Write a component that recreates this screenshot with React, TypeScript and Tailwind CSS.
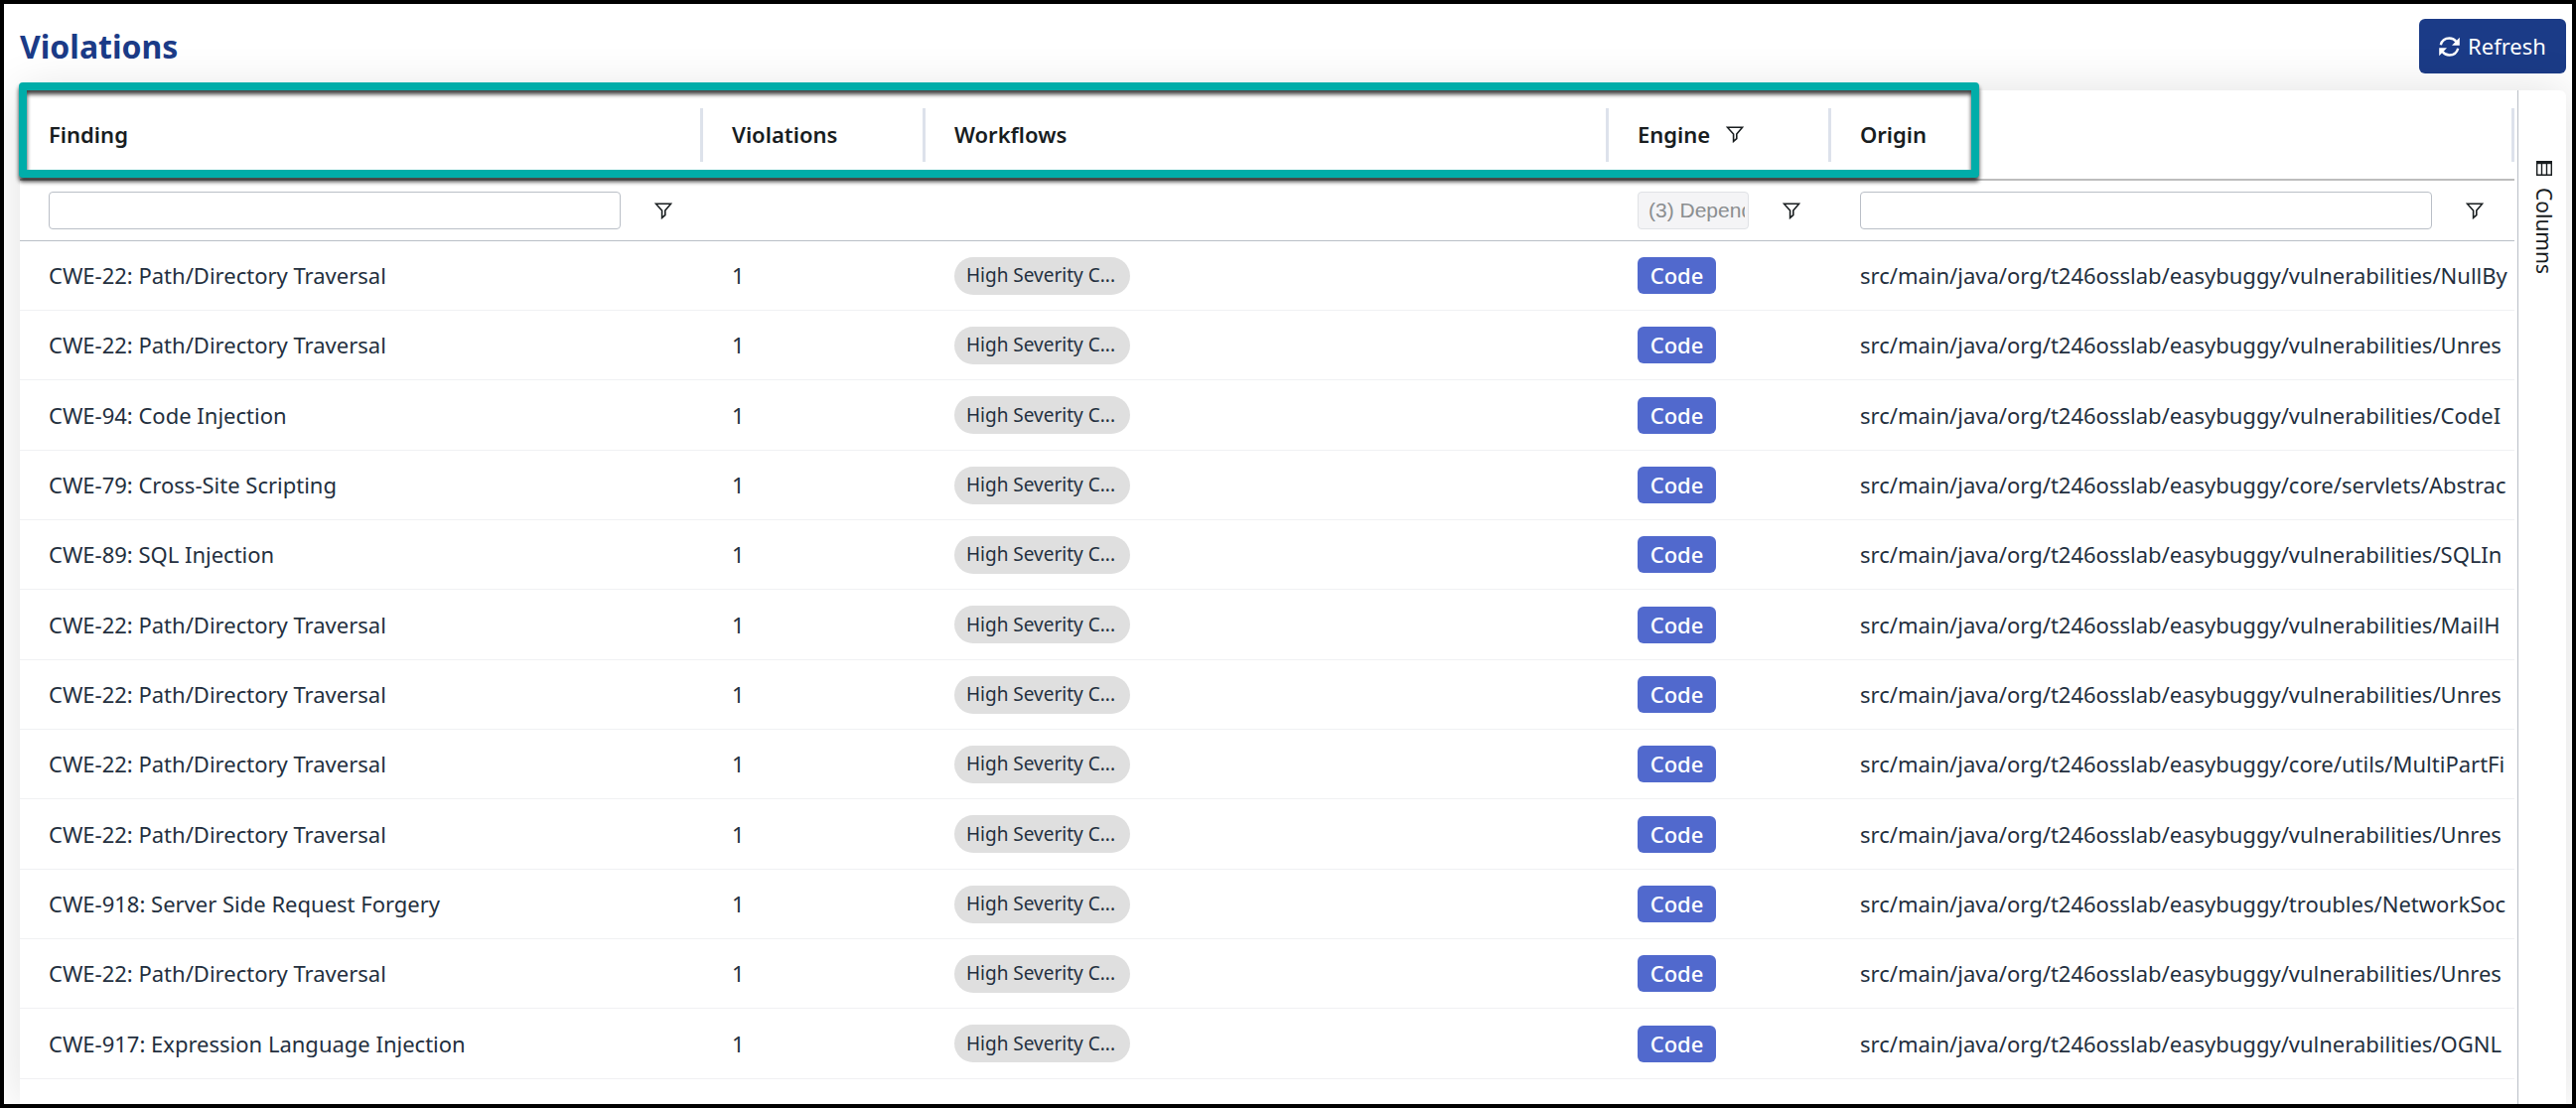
import { useState } from 'react'

const findings = [
  { name: 'CWE-22: Path/Directory Traversal', origin: 'vulnerabilities/NullBy' },
  { name: 'CWE-22: Path/Directory Traversal', origin: 'vulnerabilities/Unres' },
  { name: 'CWE-94: Code Injection', origin: 'vulnerabilities/CodeI' },
  { name: 'CWE-79: Cross-Site Scripting', origin: 'core/servlets/Abstrac' },
  { name: 'CWE-89: SQL Injection', origin: 'vulnerabilities/SQLIn' },
  { name: 'CWE-22: Path/Directory Traversal', origin: 'vulnerabilities/MailH' },
  { name: 'CWE-22: Path/Directory Traversal', origin: 'vulnerabilities/Unres' },
  { name: 'CWE-22: Path/Directory Traversal', origin: 'core/utils/MultiPartFi' },
  { name: 'CWE-22: Path/Directory Traversal', origin: 'vulnerabilities/Unres' },
  { name: 'CWE-918: Server Side Request Forgery', origin: 'troubles/NetworkSoc' },
  { name: 'CWE-22: Path/Directory Traversal', origin: 'vulnerabilities/Unres' },
  { name: 'CWE-917: Expression Language Injection', origin: 'vulnerabilities/OGNL' },
]

const headers = ['Finding', 'Violations', 'Workflows', 'Engine', 'Origin']

function RefreshIcon() {
  return (
    <svg viewBox="0 0 21 20" className="h-5 w-[21px]" fill="none" stroke="currentColor" strokeWidth="2.4">
      <path d="M1.8 8.2C2.8 4.2 6.2 1.5 10.5 1.5c3 0 5.4 1.3 7 3.4M19.2 11.8c-1 4-4.4 6.7-8.7 6.7-3 0-5.4-1.3-7-3.4" />
      <path d="M20.8.8v8H13zM.2 19.2v-8H8z" fill="currentColor" stroke="none" />
    </svg>
  )
}

function FilterIcon() {
  return (
    <svg viewBox="0 0 18 17" className="h-[17px] w-[18px]" fill="none" stroke="#181d1f" strokeWidth="1.6">
      <path d="M1.4 1.2h15.2L10.8 8v4.6L7.6 15.4V8z" />
    </svg>
  )
}

function ColumnsIcon() {
  return (
    <svg viewBox="0 0 16 15" className="h-[15px] w-4" fill="none" stroke="#181d1f" strokeWidth="1.4">
      <path d="M.7 1.5h14.6v12.8H.7zM5.5 2v12M10.5 2v12" />
      <path d="M0 1.6h16" strokeWidth="3.2" />
    </svg>
  )
}

function TextFilter({ label }: { label: string }) {
  const [value, setValue] = useState('')
  return (
    <div className="flex items-center gap-[34px] pr-[31px] pl-[29px]">
      <input
        aria-label={`${label} filter`}
        value={value}
        onChange={(e) => setValue(e.target.value)}
        className="h-[38px] min-w-0 flex-1 rounded-[4px] border border-[#babfc7] px-3 text-[21px]"
      />
      <button type="button" aria-label={`Open ${label} filter menu`}>
        <FilterIcon />
      </button>
    </div>
  )
}

export default function App() {
  return (
    <main className="flex h-screen flex-col overflow-hidden border-4 border-black bg-white font-['Noto_Sans',sans-serif] text-[22px]">
      <header className="flex h-[87px] shrink-0 items-start justify-between pr-1.5 pl-4">
        <h1 className="mt-[19px] text-[32px] leading-12 font-bold text-[#1b3b87]">Violations</h1>
        <button
          type="button"
          className="mt-[15px] flex h-[55px] min-w-[148px] items-center justify-center gap-2 rounded-md bg-[#1b3b87] px-5 text-white"
        >
          <RefreshIcon />
          Refresh
        </button>
      </header>

      <section className="relative mr-1.5 ml-4 flex min-h-0 flex-1 rounded-t-md bg-white shadow-[0_0_48px_rgba(0,0,0,0.12)]">
        <div className="min-w-0 flex-1 overflow-hidden pr-[3px]">
          <table className="w-full table-fixed border-separate border-spacing-0 text-left">
            <colgroup>
              <col />
              <col className="w-[224px]" />
              <col />
              <col className="w-[224px]" />
              <col />
            </colgroup>
            <thead className="text-[#181d1f]">
              <tr>
                {headers.map((header) => (
                  <th key={header} scope="col" className="h-[91px] border-b-2 border-[#bdbdbd] p-0 font-semibold">
                    <div className="flex h-[54px] items-center gap-4 border-r-[3px] border-[#dde2eb] pl-[29px]">
                      {header}
                      {header === 'Engine' && <FilterIcon />}
                    </div>
                  </th>
                ))}
              </tr>
              <tr>
                <td className="h-[61px] border-b border-[#babfc7] p-0">
                  <TextFilter label="Finding" />
                </td>
                <td className="border-b border-[#babfc7] p-0" />
                <td className="border-b border-[#babfc7] p-0" />
                <td className="border-b border-[#babfc7] p-0">
                  <div className="flex items-center gap-[34px] pr-[31px] pl-[29px]">
                    <input
                      aria-label="Engine filter"
                      disabled
                      defaultValue="(3) Dependencies,Code,Secrets"
                      className="h-[38px] min-w-0 flex-1 rounded-[4px] border border-[#e0e2e6] bg-[#f4f4f6] pr-[3px] pl-2.5 font-['Liberation_Sans',sans-serif] text-[21px] text-[#8b8e90]"
                    />
                    <button type="button" aria-label="Open Engine filter menu">
                      <FilterIcon />
                    </button>
                  </div>
                </td>
                <td className="border-b border-[#babfc7] p-0">
                  <TextFilter label="Origin" />
                </td>
              </tr>
            </thead>
            <tbody className="text-[#232f3e]">
              {findings.map((finding, index) => (
                <tr key={index} className="h-[70px] nth-[3n]:h-[71px]">
                  <td className="border-b border-[#f0f1f3] py-0 pr-0 pl-[29px]">{finding.name}</td>
                  <td className="border-b border-[#f0f1f3] py-0 pr-0 pl-[29px]">1</td>
                  <td className="border-b border-[#f0f1f3] py-0 pr-0 pl-[29px]">
                    <span className="flex h-[38px] w-[177px] items-center rounded-full bg-[#dfdfdf] px-3 text-[19px]">
                      High Severity C...
                    </span>
                  </td>
                  <td className="border-b border-[#f0f1f3] py-0 pr-0 pl-[29px]">
                    <span className="flex h-[37px] w-[79px] items-center justify-center rounded-md bg-[#5169cd] font-medium text-white">
                      Code
                    </span>
                  </td>
                  <td className="border-b border-[#f0f1f3] py-0 pr-0 pl-[29px] whitespace-nowrap">
                    src/main/java/org/t246osslab/easybuggy/{finding.origin}
                  </td>
                </tr>
              ))}
            </tbody>
          </table>
        </div>

        <aside className="w-[49px] border-l border-[#babfc7] pt-[71px]">
          <button type="button" className="flex w-full flex-col items-center gap-3 pl-1 text-[21px] leading-7 text-[#181d1f]">
            <ColumnsIcon />
            <span className="[writing-mode:vertical-rl]">Columns</span>
          </button>
        </aside>

        {/* highlight around the column headers */}
        <div className="pointer-events-none absolute -top-2 -left-px h-24 w-[77%] rounded-[4px] border-8 border-[#00ada9] drop-shadow-[0_4px_2px_rgba(0,0,0,0.75)]" />
      </section>
    </main>
  )
}
